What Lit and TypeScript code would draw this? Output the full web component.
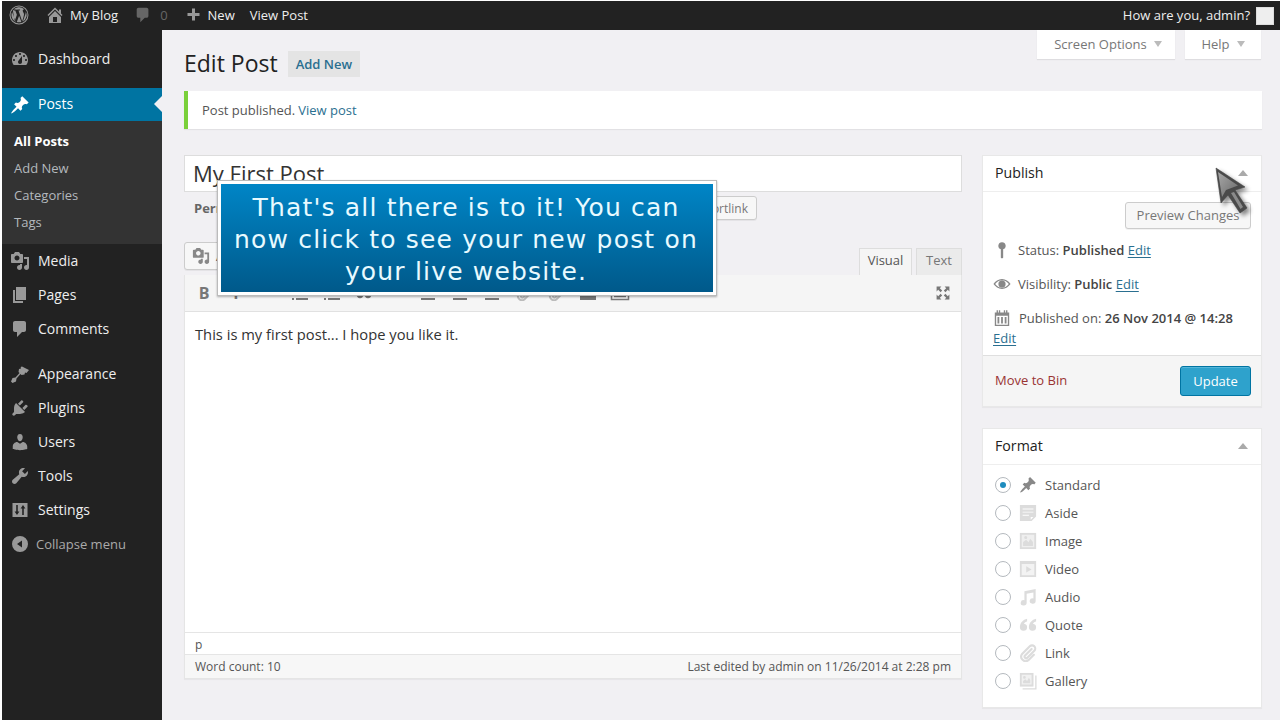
import { LitElement, html, css, svg } from "lit";
import { customElement } from "lit/decorators.js";

const icon = (body: unknown, size = 20, cls = "") =>
  html`<svg class=${cls} width=${size} height=${size} viewBox="0 0 20 20" fill="currentColor" aria-hidden="true">${body}</svg>`;

const alignIcon = svg`<path d="M3 3h14v2H3zM3 7h14v2H3zM3 11h14v2H3zM3 15h14v2H3z"/>`;
const listIcon = svg`<path d="M2 5h2v2H2zM6 5h12v2H6zM2 10h2v2H2zM6 10h12v2H6zM2 15h2v2H2zM6 15h12v2H6z"/>`;

const I: Record<string, unknown> = {
  dashboard: svg`<path fill-rule="evenodd" d="M3.760 16h12.480c1.100-1.370 1.760-3.110 1.760-5 0-4.420-3.580-8-8-8s-8 3.580-8 8c0 1.890.660 3.630 1.760 5zM10 4c.550 0 1 .450 1 1s-.450 1-1 1-1-.450-1-1 .450-1 1-1zM6 6c.550 0 1 .450 1 1s-.450 1-1 1-1-.450-1-1 .450-1 1-1zm8 0c.550 0 1 .450 1 1s-.450 1-1 1-1-.450-1-1 .450-1 1-1zm-5.370 5.550L12 7v6c0 1.100-.900 2-2 2s-2-.900-2-2c0-.570.240-1.080.630-1.450zM4 10c.550 0 1 .450 1 1s-.450 1-1 1-1-.450-1-1 .450-1 1-1zm12 0c.550 0 1 .450 1 1s-.450 1-1 1-1-.450-1-1 .450-1 1-1z"/>`,
  pin: svg`<path d="M10.440 3.020l1.820-1.820 6.360 6.350-1.830 1.820c-1.050-.680-2.480-.570-3.410.360l-.750.750c-.920.930-1.040 2.350-.350 3.410l-1.830 1.820-2.410-2.410-2.800 2.790c-.420.420-3.380 2.710-3.800 2.290s1.860-3.390 2.280-3.810l2.790-2.790L4.100 9.360l1.830-1.820c1.050.690 2.480.570 3.400-.360l.750-.750c.930-.920 1.050-2.350.360-3.410z"/>`,
  media: svg`<path fill-rule="evenodd" d="M13 11V4c0-.550-.450-1-1-1h-1.670L9 1H5L3.670 3H2c-.550 0-1 .450-1 1v7c0 .550.450 1 1 1h10c.550 0 1-.450 1-1zM7 4.500c1.380 0 2.500 1.120 2.500 2.500S8.380 9.500 7 9.500 4.500 8.380 4.500 7 5.620 4.500 7 4.500zM14 6h5v10.500c0 1.380-1.120 2.500-2.500 2.500S14 17.880 14 16.500s1.120-2.500 2.500-2.500c.170 0 .340.020.500.050V8h-3V6zm-4 8.050V13h2v3.500c0 1.380-1.120 2.500-2.500 2.500S7 17.880 7 16.500 8.120 14 9.500 14c.170 0 .340.020.500.050z"/>`,
  pages: svg`<path d="M6 15V2h10v13H6zm-1 1h8v2H3V5h2v11z"/>`,
  comments: svg`<path d="M5 2h9c1.100 0 2 .900 2 2v7c0 1.100-.900 2-2 2h-2l-5 5v-5H5c-1.100 0-2-.900-2-2V4c0-1.100.900-2 2-2z"/>`,
  appearance: svg`<path d="M12 2.500l7 3.500-2.500 3-1.500-.5-.5 2-3 .5-1-1-4 4.500-.5 3-3.500 1.500-1.500-1.500L2.500 14l3-.5 4-4.500-1-1 .5-3 2-.5-.3-1.500L12 2.500z"/>`,
  plugins: svg`<path d="M13.110 4.360L9.870 7.600 8 5.730l3.240-3.240c.350-.340 1.050-.200 1.560.320.520.510.660 1.210.310 1.550zm-8 1.770l.910-1.120 9.010 9.010-1.190.840c-.710.710-2.630 1.160-3.820 1.160H6.140L4.900 17.260c-.590.590-1.540.590-2.120 0-.590-.580-.590-1.530 0-2.120l1.240-1.240v-3.880c0-1.130.400-3.190 1.090-3.890zm7.260 3.970l3.240-3.240c.340-.350 1.040-.210 1.550.310.520.510.660 1.210.310 1.550l-3.240 3.250z"/>`,
  users: svg`<path d="M10 9.250c-2.270 0-2.730-3.440-2.730-3.440C7 4.020 7.820 2 9.970 2c2.160 0 2.980 2.020 2.710 3.810 0 0-.410 3.440-2.680 3.440zm0 2.570L12.720 10c2.390 0 4.520 2.330 4.520 4.530v2.490s-3.650 1.130-7.240 1.130c-3.650 0-7.240-1.130-7.240-1.130v-2.490c0-2.250 1.940-4.480 4.470-4.480z"/>`,
  tools: svg`<path fill-rule="evenodd" d="M16.680 9.770c-1.340 1.340-3.300 1.670-4.950.990l-5.410 6.520c-.990.990-2.590.990-3.570 0-.990-.980-.990-2.580 0-3.570l6.520-5.420c-.680-1.650-.350-3.610.990-4.950 1.280-1.280 3.120-1.620 4.720-1.060l-2.890 2.890 2.820 2.820 2.860-2.870c.530 1.580.180 3.410-1.090 4.650z"/>`,
  settings: svg`<path fill-rule="evenodd" d="M2.500 3h15v14h-15V3zM6.200 5v6.500H4.600L7 15l2.400-3.500H7.800V5H6.200zm6 10h1.600V8.500h1.600L13 5l-2.400 3.500h1.600V15z"/>`,
  collapse: svg`<path fill-rule="evenodd" d="M8 2a8 8 0 1 1 0 16 8 8 0 0 1 0-16zm2 4.500L5 10l5 3.500v-7z"/>`,
  home: svg`<path fill-rule="evenodd" d="M16 8.500l1.530 1.530-1.060 1.060L10 4.620l-6.470 6.470-1.060-1.060L10 2.500l4 4v-2h2v4zm-6-2.460l6 5.990V18H4v-5.970zM12 17v-5H8v5h4z"/>`,
  plus: svg`<path d="M8 2h4v6h6v4h-6v6H8v-6H2V8h6V2z"/>`,
  wp: svg`<path fill-rule="evenodd" d="M10 .5a9.500 9.500 0 1 1 0 19 9.500 9.500 0 0 1 0-19zm0 1a8.500 8.500 0 1 0 0 17 8.500 8.500 0 0 0 0-17zM2.500 10a7.500 7.500 0 0 1 .6-3l3.600 9.800A7.500 7.500 0 0 1 2.500 10zm12.500-.4c0 .9-.4 2-.8 3.400l-1 3.400-3.700-10.900c.6 0 1.200-.1 1.200-.1.500-.1.500-.9-.1-.8 0 0-1.600.1-2.700.1-1 0-2.600-.1-2.600-.1-.6 0-.6.800-.1.800l1.100.1 1.600 4.300L5.700 16 3.900 5.700A7.500 7.500 0 0 1 15.200 4.200c-.9 0-1.500.8-1.500 1.600 0 .8.500 1.400.9 2.100.4.500.4 1 .4 1.700zM10.100 10.700l2.300 6.200a7.500 7.500 0 0 1-4.600.1l2.300-6.300zm6.600-4.300a7.500 7.500 0 0 1-2.800 10l2.300-6.600c.4-1.100.6-2 .6-2.800 0-.2 0-.4-.1-.6z"/>`,
  eye: svg`<path fill-rule="evenodd" d="M10 4.500c4 0 7.500 2.600 9.500 5.500-2 2.900-5.500 5.500-9.500 5.500S2.500 12.900.5 10C2.500 7.100 6 4.500 10 4.500zm0 1.300C7 5.800 4.300 7.700 2.400 10 4.300 12.300 7 14.200 10 14.200s5.700-1.900 7.600-4.200C15.700 7.700 13 5.800 10 5.800zm0 .2a4 4 0 1 1 0 8 4 4 0 0 1 0-8z"/>`,
  key: svg`<path d="M10 1.500a4 4 0 0 1 1.300 7.800V18.500L10 19.500l-1.300-1V9.300A4 4 0 0 1 10 1.500z"/>`,
  cal: svg`<path fill-rule="evenodd" d="M4 1.500h1.500V4h1V1.500H8V4h4V1.500h1.500V4h1V1.500H16V4h2v15H2V4h2V1.500zM3.500 7.500v10h13v-10h-13zM5 9h2v7H5V9zm4 0h2v7H9V9zm4 0h2v7h-2V9z"/>`,
  aside: svg`<path fill-rule="evenodd" d="M1 1h18v13l-5 5H1V1zm3 4v1h12V5H4zm0 3.500v1h12v-1H4zm0 3.500v1h7v-1H4zm9 2.500v3l3-3h-3z"/>`,
  image: svg`<rect x="1" y="1" width="18" height="18" opacity=".45"/><path fill-rule="evenodd" d="M1 1h18v18H1V1zm2 2v14h14V3H3zm1.500 12.500V11l3.500-2.500 2.500 3 2-4 3 3.500v4.500h-11zM7.500 4.500a1.700 1.700 0 1 1 0 3.400 1.700 1.700 0 0 1 0-3.400z"/>`,
  video: svg`<rect x="1" y="1" width="18" height="18" opacity=".35"/><path fill-rule="evenodd" d="M1 1h18v18H1V1zm2 3.500V17h14V4.500H3zM8 7l6 3.500L8 14V7z"/>`,
  audio: svg`<path d="M6 3.500L18.500 1v13.500a3.300 3 0 1 1-2.500-2.900V5L8.500 6.400v10.100a3.300 3 0 1 1-2.500-2.900V3.500z"/>`,
  quote: svg`<path d="M9 3C4.500 4 1 7.500 1 12.500a4 4 0 1 0 4.500-4C6 7.500 7.500 6.500 9 6.200V3zm10 0c-4.500 1-8 4.500-8 9.500a4 4 0 1 0 4.500-4c.5-1 2-2 3.500-2.300V3z"/>`,
  link: svg`<path fill="none" stroke="currentColor" stroke-width="2.400" stroke-linecap="round" d="M14 5.500L6.500 13a1.800 1.800 0 0 0 2.500 2.500l8-8a3.500 3.500 0 0 0-5-5L3.500 11a5 5 0 0 0 7 7l6-6"/>`,
  gallery: svg`<rect x="1" y="1" width="15" height="15" opacity=".4"/><path fill-rule="evenodd" d="M1 1h15v15H1V1zm2 2v11h11V3H3zm1.500 9.500V10l2.500-2 2 2 2-3.500 1.500 2.500v3.500h-8zM18 4h1.500v15.500H4V18h14V4zM6 4.500a1.500 1.500 0 1 1 0 3 1.500 1.500 0 0 1 0-3z"/>`,
  expand: svg`<path d="M2 2h6L6 4l3 3-2 2-3-3-2 2V2zm16 0v6l-2-2-3 3-2-2 3-3-2-2h6zM2 18v-6l2 2 3-3 2 2-3 3 2 2H2zm16 0h-6l2-2-3-3 2-2 3 3 2-2v6z"/>`,
};

const menuTop = [["dashboard", "Dashboard"]];
const menuMid = [["media", "Media"], ["pages", "Pages"], ["comments", "Comments"]];
const menuLow = [["appearance", "Appearance"], ["plugins", "Plugins"], ["users", "Users"], ["tools", "Tools"], ["settings", "Settings"]];
const formats = [["pin", "Standard"], ["aside", "Aside"], ["image", "Image"], ["video", "Video"], ["audio", "Audio"], ["quote", "Quote"], ["link", "Link"], ["gallery", "Gallery"]];

@customElement("app-root")
export class AppRoot extends LitElement {
  static styles = css`
    :host { display: block; position: relative; width: 1280px; height: 720px; overflow: hidden; background: #fff; font-family: "Open Sans", "Noto Sans", sans-serif; font-size: 13px; color: #555; }
    a { color: #2a6f90; text-decoration: none; }
    u { text-underline-offset: 2px; }
    svg { display: block; flex: none; }
    .adminbar { height: 29px; margin: 1px 0 0 2px; box-sizing: border-box; padding-bottom: 2px; background: #222; color: #eee; display: flex; align-items: center; }
    .adminbar .ic { color: #999; }
    .wp { margin: 0 0 0 7px; }
    .ab { display: flex; align-items: center; }
    .ab-home { margin-left: 16px; gap: 5px; }
    .ab-comments { margin-left: 16px; gap: 8px; color: #666; }
    .adminbar .ab-comments .ic { color: #666; }
    .ab-new { margin-left: 18px; gap: 7px; }
    .ab-view { margin-left: 15px; }
    .spacer { flex: 1; }
    .greet { margin-right: 6px; }
    .avatar { width: 18px; height: 18px; box-sizing: border-box; margin: 2px 6px 0 0; background: #eee; border: 1px solid #ddd; }
    .shell { display: flex; height: 690px; margin-left: 2px; background: #f1f0f3; }
    .side { width: 160px; background: #222; color: #eee; flex: none; padding-top: 12px; font-size: 14px; box-sizing: border-box; }
    .mi { height: 34px; display: flex; align-items: center; gap: 6px; padding-left: 10px; }
    .mi > span:last-child { margin-top: -2px; }
    .mi .ic { color: #999; width: 20px; margin: 0 2px 0 -2px; }
    .mi.cur { height: 33px; margin-top: 12px; background: #0074a2; color: #fff; position: relative; }
    .mi.cur .ic { color: #fff; }
    .mi.cur::after { content: ""; position: absolute; right: 0; top: 8px; border: 8px solid transparent; border-right-color: #f1f0f3; border-left: 0; }
    .sub { height: 123px; box-sizing: border-box; background: #333; padding: 7px 0 0 12px; font-size: 13px; color: #b4b9be; }
    .sub div { height: 27px; line-height: 27px; }
    .sub .on { color: #fff; font-weight: 700; }
    .gap { height: 11px; }
    .mi.col { color: #aaa; font-size: 13px; gap: 4px; }
    .mi.col .ic { margin: 0; }
    .mi.col > span:last-child { margin-top: 0; }
    .main { flex: 1; min-width: 0; padding: 0 18px 0 22px; display: flex; flex-direction: column; }
    .tabs { display: flex; justify-content: flex-end; gap: 10px; height: 29px; padding-right: 1px; }
    .tab { height: 29px; box-sizing: border-box; background: #fff; box-shadow: 0 1px 1px rgba(0,0,0,.08); color: #777; display: flex; align-items: center; justify-content: center; gap: 7px; padding-bottom: 2px; }
    .tab.so { width: 138px; padding-left: 4px; }
    .tab.he { width: 76px; }
    .caret { width: 0; height: 0; border: 4.500px solid transparent; border-top: 6px solid #bbb; border-bottom: 0; }
    .tri { width: 0; height: 0; border: 5px solid transparent; border-bottom: 6px solid #aaa; border-top: 0; }
    .head { display: flex; align-items: center; height: 26px; margin-top: -8px; gap: 10px; }
    .head h1 { margin: -2px 0 0; font-weight: 400; font-size: 23px; color: #222; line-height: 26px; }
    .addnew { background: #e4e4e4; color: #2a6f90; font-weight: 600; height: 26px; line-height: 26px; padding: 0 8px; font-size: 13px; }
    .notice { margin-top: 14px; height: 38px; box-sizing: border-box; background: #fff; border-left: 4px solid #7ad03a; box-shadow: 0 1px 1px rgba(0,0,0,.06); padding-left: 14px; display: flex; align-items: center; gap: 3px; }
    .cols { display: flex; gap: 20px; margin-top: 26px; }
    .left { width: 778px; flex: none; }
    .right { width: 280px; flex: none; }
    .title { height: 37px; box-sizing: border-box; background: #fff; border: 1px solid #ddd; padding-left: 8px; font-size: 22px; line-height: 35px; color: #333; }
    .perma { height: 28px; display: flex; align-items: center; margin-top: 2px; padding-left: 10px; justify-content: space-between; padding-right: 205px; color: #666; }
    .btn { height: 24px; box-sizing: border-box; background: #f7f7f7; border: 1px solid #ccc; border-radius: 3px; padding: 0 8px; display: flex; align-items: center; font-size: 12px; color: #777; box-shadow: 0 1px 0 rgba(0,0,0,.05); }
    .etabs { display: flex; height: 33px; margin-top: 20px; gap: 4px; align-items: flex-end; }
    .addmedia { height: 28px; margin: 0 auto 5px 0; padding: 0 10px 0 7px; gap: 6px; font-size: 13px; color: #555; }
    .addmedia svg { color: #888; }
    .et { height: 27px; box-sizing: border-box; display: flex; align-items: center; justify-content: center; font-size: 13px; color: #777; border: 1px solid #ddd; border-bottom: 0; background: #ebebeb; padding-bottom: 5px; }
    .et.v { width: 53px; background: #f5f5f5; color: #555; }
    .et.t { width: 46px; }
    .editor { border: 1px solid #e5e5e5; border-top: 0; box-shadow: 0 1px 1px rgba(0,0,0,.04); background: #fff; }
    .tools { height: 37px; box-sizing: border-box; background: #f5f5f5; border-bottom: 1px solid #e1e1e1; display: flex; align-items: center; padding: 0 10px 0 3px; color: #777; }
    .tb { width: 32px; height: 20px; display: flex; align-items: center; justify-content: center; font-weight: 700; font-size: 16px; flex: none; }
    .tb svg { color: #777; }
    .tb.dim svg { color: #bbb; }
    .body { height: 320px; box-sizing: border-box; padding: 12px 10px; font-size: 14.720px; line-height: 20px; color: #333; background: #fff; }
    .path { height: 23px; box-sizing: border-box; border-top: 1px solid #e5e5e5; border-bottom: 1px solid #e5e5e5; background: #fff; padding-left: 10px; font-size: 12px; line-height: 24px; color: #555; }
    .foot { height: 23px; background: #f7f7f7; display: flex; justify-content: space-between; align-items: center; padding: 0 10px; font-size: 12px; color: #555; }
    .box { background: #fff; border: 1px solid #e8e8e8; box-shadow: 0 1px 1px rgba(0,0,0,.04); box-sizing: border-box; }
    .box.pub { height: 252px; }
    .box.fmt { height: 280px; margin-top: 21px; }
    .bh { height: 36px; box-sizing: border-box; border-bottom: 1px solid #eee; display: flex; align-items: center; justify-content: space-between; padding: 0 13px 2px 12px; font-size: 14.200px; color: #222; }
    .preview { height: 27px; width: 126px; margin: 10px 10px 0 auto; justify-content: center; font-size: 13px; color: #777; padding: 0 0 2px; }
    .row { display: flex; align-items: center; gap: 7px; height: 20px; padding-left: 10px; }
    .row.cl { gap: 8px; }
    .row b { color: #444; font-weight: 600; }
    .row svg { color: #888; }
    .r1 { margin-top: 11px; }
    .r2 { margin-top: 14px; }
    .r3 { margin-top: 14px; }
    .editl { display: block; padding-left: 10px; line-height: 20px; }
    .pubfoot { margin-top: 7px; height: 51px; box-sizing: border-box; background: #f5f5f5; border-top: 1px solid #dfdfdf; display: flex; align-items: center; justify-content: space-between; padding: 0 10px 0 12px; }
    .bin { color: #993333; margin-top: -2px; }
    .update { width: 71px; height: 30px; box-sizing: border-box; background: #2ea2cc; border: 1px solid #0074a2; border-radius: 3px; color: #fff; display: flex; align-items: center; justify-content: center; font-weight: 400; box-shadow: inset 0 1px 0 rgba(120,200,230,.5); }
    .fl { padding-top: 6px; }
    .fr { height: 28px; display: flex; align-items: center; padding-left: 12px; }
    .radio { width: 16px; height: 16px; box-sizing: border-box; border: 1px solid #b4b9be; border-radius: 50%; background: #fff; margin-right: 8px; display: flex; align-items: center; justify-content: center; flex: none; }
    .radio i { width: 6px; height: 6px; background: #1e8cbe; border-radius: 50%; }
    .fr svg { color: #dcdcdc; margin-right: 8px; }
    .fr.on svg { color: #888; }
    .overlay { position: absolute; left: 217px; top: 180px; width: 500px; height: 116px; box-sizing: border-box; border: 4px solid #fff; outline: 1px solid #bbb; outline-offset: -1px; box-shadow: 0 1px 2px rgba(0,0,0,.3); background: linear-gradient(#0085c6, #00598a); color: #e8faff; font-family: "DejaVu Sans", Verdana, sans-serif; font-size: 25px; line-height: 32px; letter-spacing: 1.180px; text-align: center; padding: 8px 2px 0 0; white-space: nowrap; }
    .cursor { position: absolute; left: 1214px; top: 166px; filter: drop-shadow(3px 3px 2px rgba(0,0,0,.45)); }
  `;

  private tb(body: unknown, dim = false) {
    return html`<div class="tb ${dim ? "dim" : ""}">${body}</div>`;
  }

  render() {
    const mi = (m: string[]) => html`<div class="mi"><span class="ic">${icon(I[m[0]])}</span><span>${m[1]}</span></div>`;
    return html`
      <div class="adminbar">
        <span class="ic wp">${icon(I.wp)}</span>
        <span class="ab ab-home"><span class="ic">${icon(I.home)}</span>My Blog</span>
        <span class="ab ab-comments"><span class="ic">${icon(I.comments, 18)}</span>0</span>
        <span class="ab ab-new"><span class="ic">${icon(I.plus, 15)}</span>New</span>
        <span class="ab ab-view">View Post</span>
        <span class="spacer"></span>
        <span class="greet">How are you, admin?</span>
        <span class="avatar"></span>
      </div>
      <div class="shell">
        <nav class="side">
          ${menuTop.map(mi)}
          <div class="mi cur"><span class="ic">${icon(I.pin)}</span><span>Posts</span></div>
          <div class="sub"><div class="on">All Posts</div><div>Add New</div><div>Categories</div><div>Tags</div></div>
          ${menuMid.map(mi)}
          <div class="gap"></div>
          ${menuLow.map(mi)}
          <div class="mi col"><span class="ic">${icon(I.collapse)}</span><span>Collapse menu</span></div>
        </nav>
        <main class="main">
          <div class="tabs">
            <div class="tab so">Screen Options <span class="caret"></span></div>
            <div class="tab he">Help <span class="caret"></span></div>
          </div>
          <div class="head"><h1>Edit Post</h1><a class="addnew">Add New</a></div>
          <div class="notice">Post published. <a>View post</a></div>
          <div class="cols">
            <div class="left">
              <div class="title">My First Post</div>
              <div class="perma"><b>Permalink:</b><span class="btn">Get Shortlink</span></div>
              <div class="etabs">
                <span class="btn addmedia">${icon(I.media, 18)}Add Media</span>
                <span class="et v">Visual</span><span class="et t">Text</span>
              </div>
              <div class="editor">
                <div class="tools">
                  ${this.tb("B")}
                  ${this.tb("I")}
                  ${this.tb("")}
                  ${this.tb(icon(listIcon))}
                  ${this.tb(icon(listIcon))}
                  ${this.tb(icon(I.quote, 16))}
                  ${this.tb("")}
                  ${this.tb(icon(alignIcon))}
                  ${this.tb(icon(alignIcon))}
                  ${this.tb(icon(alignIcon))}
                  ${this.tb(icon(I.link, 16), true)}
                  ${this.tb(icon(I.link, 16), true)}
                  ${this.tb(icon(svg`<path d="M2 3h16v14H2z"/>`))}
                  ${this.tb(icon(svg`<path fill="none" stroke="currentColor" stroke-width="1.500" d="M1.500 4.500h17v12h-17zM4 13.500h12"/>`))}
                  <span class="spacer"></span>
                  ${icon(I.expand, 16)}
                </div>
                <div class="body">This is my first post... I hope you like it.</div>
                <div class="path">p</div>
                <div class="foot"><span>Word count: 10</span><span>Last edited by admin on 11/26/2014 at 2:28 pm</span></div>
              </div>
            </div>
            <aside class="right">
              <section class="box pub">
                <div class="bh">Publish <span class="tri"></span></div>
                <div class="btn preview">Preview Changes</div>
                <div class="row r1">${icon(I.key, 18)}<span>Status: <b>Published</b> <a><u>Edit</u></a></span></div>
                <div class="row r2">${icon(I.eye, 18)}<span>Visibility: <b>Public</b> <a><u>Edit</u></a></span></div>
                <div class="row r3 cl">${icon(I.cal, 18)}<span>Published on: <b>26 Nov 2014 @ 14:28</b></span></div>
                <a class="editl"><u>Edit</u></a>
                <div class="pubfoot"><span class="bin">Move to Bin</span><span class="update">Update</span></div>
              </section>
              <section class="box fmt">
                <div class="bh">Format <span class="tri"></span></div>
                <div class="fl">
                  ${formats.map((f, i) => html`<div class="fr ${i === 0 ? "on" : ""}"><span class="radio">${i === 0 ? html`<i></i>` : ""}</span>${icon(I[f[0]], 18)}<span>${f[1]}</span></div>`)}
                </div>
              </section>
            </aside>
          </div>
        </main>
      </div>
      <div class="overlay">That's all there is to it! You can<br>now click to see your new post on<br>your live website.</div>
      <svg class="cursor" width="38" height="50" viewBox="0 0 38 50" aria-hidden="true">
        <defs>
          <linearGradient id="cg" x1="0" y1="0" x2="1" y2="1"><stop offset="0" stop-color="#a8a8a8"/><stop offset="1" stop-color="#6a6a6a"/></linearGradient>
        </defs>
        <path d="M2 2L31 21 21 24 33 42 26 47 14 29 7 37z" fill="#4a4a4a" stroke="#444" stroke-width=".6"/>
        <path d="M4 6L24 19.500 12 24 8 31z" fill="url(#cg)"/>
        <path d="M17 27l3-1 9 15-2.500 2z" fill="#8a8a8a"/>
      </svg>
    `;
  }
}
